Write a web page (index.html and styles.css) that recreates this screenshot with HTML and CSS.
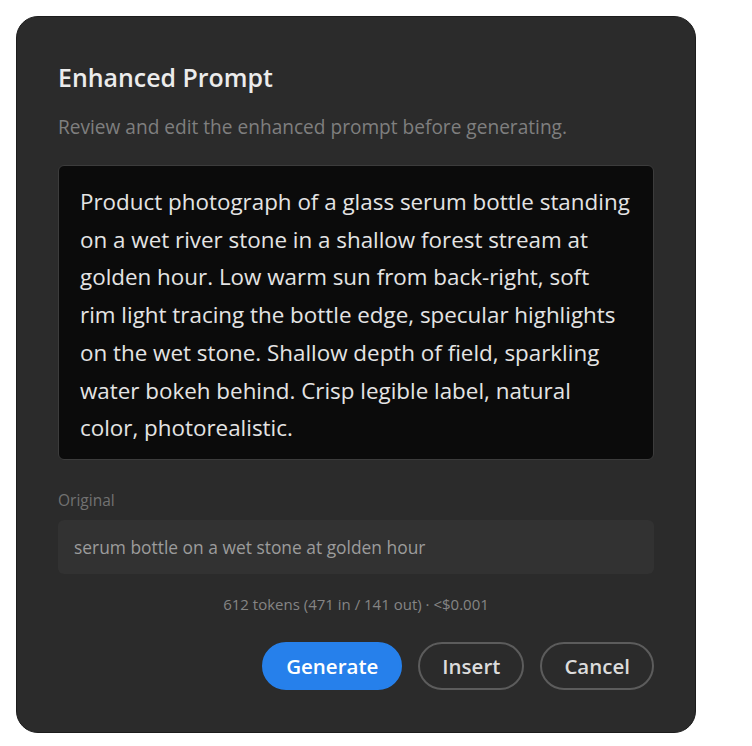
FILE: index.html
```html
<!DOCTYPE html>
<html lang="en">

<head>
    <meta charset="utf-8">
    <title>Enhanced Prompt</title>
    <meta name="viewport" content="width=device-width, initial-scale=1.0">
    <link rel="stylesheet" href="styles.css">
</head>

<body>
    <!-- Boîte de dialogue -->
    <div class="dialogue">
        <h2 class="titre">Enhanced Prompt</h2>
        <p class="sous-titre">Review and edit the enhanced prompt before generating.</p>

        <!-- Prompt amélioré -->
        <div class="prompt">
            Product photograph of a glass serum bottle standing<br>
            on a wet river stone in a shallow forest stream at<br>
            golden hour. Low warm sun from back-right, soft<br>
            rim light tracing the bottle edge, specular highlights<br>
            on the wet stone. Shallow depth of field, sparkling<br>
            water bokeh behind. Crisp legible label, natural<br>
            color, photorealistic.
        </div>

        <!-- Prompt original -->
        <p class="etiquette">Original</p>
        <div class="original">serum bottle on a wet stone at golden hour</div>

        <p class="jetons">612 tokens (471 in / 141 out) · &lt;$0.001</p>

        <!-- Boutons -->
        <div class="boutons">
            <button class="bouton bouton-principal">Generate</button>
            <button class="bouton">Insert</button>
            <button class="bouton">Cancel</button>
        </div>
    </div>
</body>

</html>
```

FILE: styles.css
```css
/* Normalisation
============================================================*/

* {
    margin: 0;
    padding: 0;
    box-sizing: border-box;
}

html {
    font-family: "Open Sans", "Noto Sans", sans-serif;
}

body {
    background-color: white;
    padding: 16px;
}

/* La boîte de dialogue
============================================================*/

.dialogue {
    width: 680px;
    height: 717px;
    background-color: #2b2b2b;
    border: 1px solid #1c1c1c;
    border-radius: 22px;
    padding: 45px 41px 0 41px;

    /*Conteneur flex en colonne*/
    display: flex;
    flex-direction: column;
}

.titre {
    font-size: 24.9px;
    font-weight: 600;
    color: #ececec;
    line-height: 30px;
}

.sous-titre {
    margin-top: 23px;
    font-size: 19.1px;
    color: #7f7f7f;
    line-height: 24px;
}

.prompt {
    margin-top: 26px;
    height: 295px;
    padding: 17px 21px;
    background-color: #0b0b0b;
    border: 1px solid #3c3c3c;
    border-radius: 6px;
    font-size: 22.4px;
    line-height: 37.7px;
    color: #e4e4e4;
}

.etiquette {
    margin-top: 30px;
    font-size: 15.5px;
    color: #727272;
    line-height: 20px;
}

.original {
    margin-top: 10px;
    height: 54px;
    padding: 0 16px;
    background-color: #323232;
    border-radius: 6px;
    font-size: 17.4px;
    color: #9c9c9c;

    display: flex;
    align-items: center;
}

.jetons {
    margin-top: 20px;
    text-align: center;
    font-size: 15px;
    color: #858585;
    line-height: 20px;
}

/* Les boutons
============================================================*/

.boutons {
    margin-top: 28px;
    display: flex;
    justify-content: flex-end;
    gap: 16px;
}

.bouton {
    height: 48px;
    padding: 0 22px;
    border: 2px solid #5c5c5c;
    border-radius: 24px;
    background-color: transparent;
    font-family: inherit;
    font-size: 20.5px;
    font-weight: 600;
    color: #dcdcdc;
    cursor: pointer;
}

.bouton-principal {
    background-color: #2680eb;
    border-color: #2680eb;
    color: white;
}
```
